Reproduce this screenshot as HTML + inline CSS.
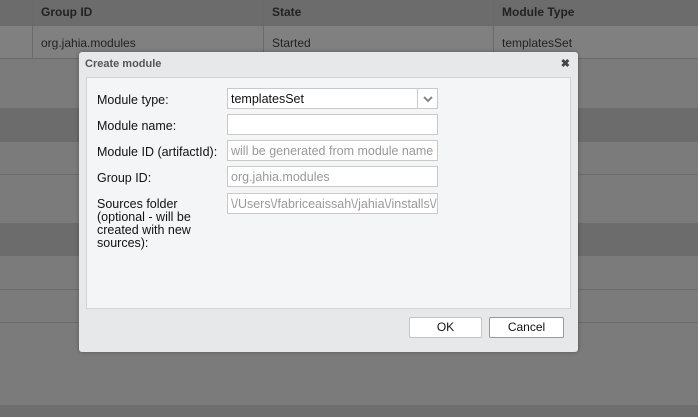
<!DOCTYPE html>
<html><head><style>
*{margin:0;padding:0;box-sizing:border-box}
body{width:698px;height:417px;overflow:hidden;background:#7b7b7b;font-family:"Liberation Sans",Arial,sans-serif;position:relative}
.b{position:absolute;left:0;width:698px}
.l{position:absolute;left:0;width:698px;height:1px;background:#6a6a6a}
.t{position:absolute;font-size:12px;color:#222}
.dlg{position:absolute;left:79px;top:52px;width:499px;height:300px;background:#e7e8e9;border-radius:3px;box-shadow:0 0 4px rgba(0,0,0,.3)}
.in{position:absolute;left:7px;top:25px;width:485px;height:232px;background:#f4f5f7;border:1px solid #d0d2d5}
.lab{position:absolute;left:10px;font-size:12.5px;color:#111;line-height:13px}
.f{position:absolute;left:140px;width:211px;height:21px;background:#fff;border:1px solid #c9c9c9;font-size:12.5px;line-height:20px;padding-left:3px;color:#999;white-space:nowrap;overflow:hidden}
.btn{position:absolute;top:265px;height:21px;background:#fff;border:1px solid #c4c4c4;border-radius:2px;font-size:12px;text-align:center;line-height:19px;color:#111}
</style></head><body>
<div class="b" style="top:0;height:25px;background:#6c6c6c"></div>
<div class="b" style="top:25px;height:33px;background:#808080"></div>
<div class="b" style="top:108px;height:34px;background:#6c6c6c"></div>
<div class="b" style="top:223px;height:33px;background:#6c6c6c"></div>
<div class="b" style="top:405px;height:12px;background:#6e6e6e"></div>
<div class="l" style="top:25px"></div><div class="l" style="top:58px"></div><div class="l" style="top:174px"></div><div class="l" style="top:289px"></div><div class="l" style="top:322px"></div>
<div style="position:absolute;left:32px;top:0;width:1px;height:58px;background:#6a6a6a"></div>
<div style="position:absolute;left:263px;top:0;width:1px;height:58px;background:#6a6a6a"></div>
<div style="position:absolute;left:493px;top:0;width:1px;height:58px;background:#6a6a6a"></div>
<div class="t" style="left:41px;top:5px;font-weight:bold">Group ID</div>
<div class="t" style="left:272px;top:5px;font-weight:bold">State</div>
<div class="t" style="left:502px;top:5px;font-weight:bold">Module Type</div>
<div class="t" style="left:41px;top:36px">org.jahia.modules</div>
<div class="t" style="left:272px;top:36px">Started</div>
<div class="t" style="left:502px;top:36px">templatesSet</div>
<div class="dlg">
<div style="position:absolute;left:6px;top:6px;font-size:11px;font-weight:bold;color:#555">Create module</div>
<div style="position:absolute;right:8px;top:5px;font-size:11px;font-weight:bold;color:#444">✖</div>
<div class="in">
<div class="lab" style="top:16px">Module type:</div>
<div class="lab" style="top:42px">Module name:</div>
<div class="lab" style="top:68px">Module ID (artifactId):</div>
<div class="lab" style="top:94px">Group ID:</div>
<div class="lab" style="top:120px">Sources folder<br>(optional - will be<br>created with new<br>sources):</div>
<div class="f" style="top:10px;color:#111">templatesSet<span style="position:absolute;right:0;top:0;width:20px;height:19px;border-left:1px solid #c9c9c9"><svg width="20" height="19"><path d="M6 8 L10 12 L14 8" stroke="#888" stroke-width="2" fill="none"/></svg></span></div>
<div class="f" style="top:36px"></div>
<div class="f" style="top:62px">will be generated from module name</div>
<div class="f" style="top:88px">org.jahia.modules</div>
<div class="f" style="top:115px">\/Users\/fabriceaissah\/jahia\/installs\/</div>
</div>
<div class="btn" style="left:330px;width:73px">OK</div>
<div class="btn" style="left:410px;width:75px;border-color:#999">Cancel</div>
</div>
</body></html>
